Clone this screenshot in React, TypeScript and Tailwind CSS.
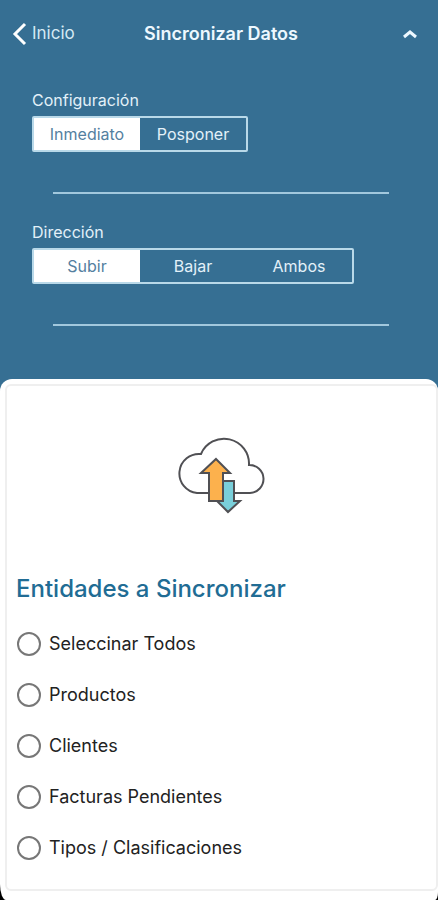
import { useState } from "react";

const ENTITIES = [
  "Seleccinar Todos",
  "Productos",
  "Clientes",
  "Facturas Pendientes",
  "Tipos / Clasificaciones",
];

type SegmentedProps = {
  label: string;
  options: string[];
};

function Segmented({ label, options }: SegmentedProps) {
  const [selected, setSelected] = useState(options[0]);
  return (
    <section className="px-8">
      <h2 className="text-base leading-6 text-[#e3f1f9]">{label}</h2>
      <div
        role="group"
        aria-label={label}
        className="mt-1 inline-flex h-9 overflow-hidden rounded-xs border-2 border-[#b9d9e9] align-top"
      >
        {options.map((option) => (
          <button
            key={option}
            type="button"
            aria-pressed={option === selected}
            onClick={() => setSelected(option)}
            className={
              option === selected
                ? "w-[106px] bg-white text-base text-[#54809f]"
                : "w-[106px] text-base text-[#e3f1f9]"
            }
          >
            {option}
          </button>
        ))}
      </div>
    </section>
  );
}

function CloudSync() {
  return (
    <svg
      width="92"
      height="80"
      viewBox="2 0 92 80"
      fill="none"
      stroke="#505054"
      strokeWidth="2"
      aria-hidden="true"
      className="mx-auto block"
    >
      <path
        d="M23 57A19.500 19.500 0 1 1 27 18A25 25 0 0 1 75 29A14 14 0 0 1 76 57Z"
        fill="#fff"
      />
      <path d="M49 45H60V65H66L54 76L43 65H49Z" fill="#79cfda" />
      <path d="M42 23L56 37H49V65H35V37H27Z" fill="#fcb14d" />
    </svg>
  );
}

export default function App() {
  return (
    <div className="min-h-screen bg-black font-['Inter','Liberation_Sans',sans-serif]">
      <div className="bg-[#366f93] pt-4">
        <header className="grid grid-cols-[1fr_auto_1fr] items-center pr-2 pl-3">
          <button type="button" className="flex h-9 items-center gap-1 text-[17px] text-[#d5e9f4]">
            <svg width="16" height="24" viewBox="0 0 16 24" fill="none" stroke="#fff" strokeWidth="3" aria-hidden="true">
              <path d="M13 2L3 12L13 22" />
            </svg>
            Inicio
          </button>
          <h1 className="text-lg font-semibold text-[#edf8ff]">Sincronizar Datos</h1>
          <button type="button" aria-label="Contraer" className="mr-3 justify-self-end">
            <svg width="16" height="12" viewBox="0 0 16 12" fill="none" stroke="#edf8ff" strokeWidth="3" aria-hidden="true">
              <path d="M2 9L8 4L14 9" />
            </svg>
          </button>
        </header>
        <main className="pt-9">
          <Segmented label="Configuración" options={["Inmediato", "Posponer"]} />
          <hr className="mt-10 mr-[49px] mb-[26px] ml-[53px] border-t-2 border-[#a2c8dd]" />
          <Segmented label="Dirección" options={["Subir", "Bajar", "Ambos"]} />
          <hr className="mt-10 mr-[49px] mb-[53px] ml-[53px] border-t-2 border-[#a2c8dd]" />
          <div className="bg-linear-to-b from-[#366f93] from-50% to-black to-50%">
            <div className="rounded-t-xl bg-white pt-[5px] pb-[9px] pl-[5px] [border-bottom-left-radius:6px_16px] [border-bottom-right-radius:3px_8px]">
              <form className="rounded-md border-2 border-[#efefef] px-[9px] pt-[50px] pb-[5px]">
                <CloudSync />
                <h2 className="mt-[57px] text-2xl font-medium text-[#216c94]">
                  Entidades a Sincronizar
                </h2>
                <ul className="mt-6 flex flex-col">
                  {ENTITIES.map((name) => (
                    <li key={name} className="h-[51px]">
                      <label className="flex h-[30px] items-center gap-2 pl-px text-lg text-[#222]">
                        <input
                          type="checkbox"
                          className="size-6 shrink-0 appearance-none rounded-full border-2 border-[#777] bg-white checked:bg-[#366f93]"
                        />
                        {name}
                      </label>
                    </li>
                  ))}
                </ul>
              </form>
            </div>
          </div>
        </main>
      </div>
    </div>
  );
}
